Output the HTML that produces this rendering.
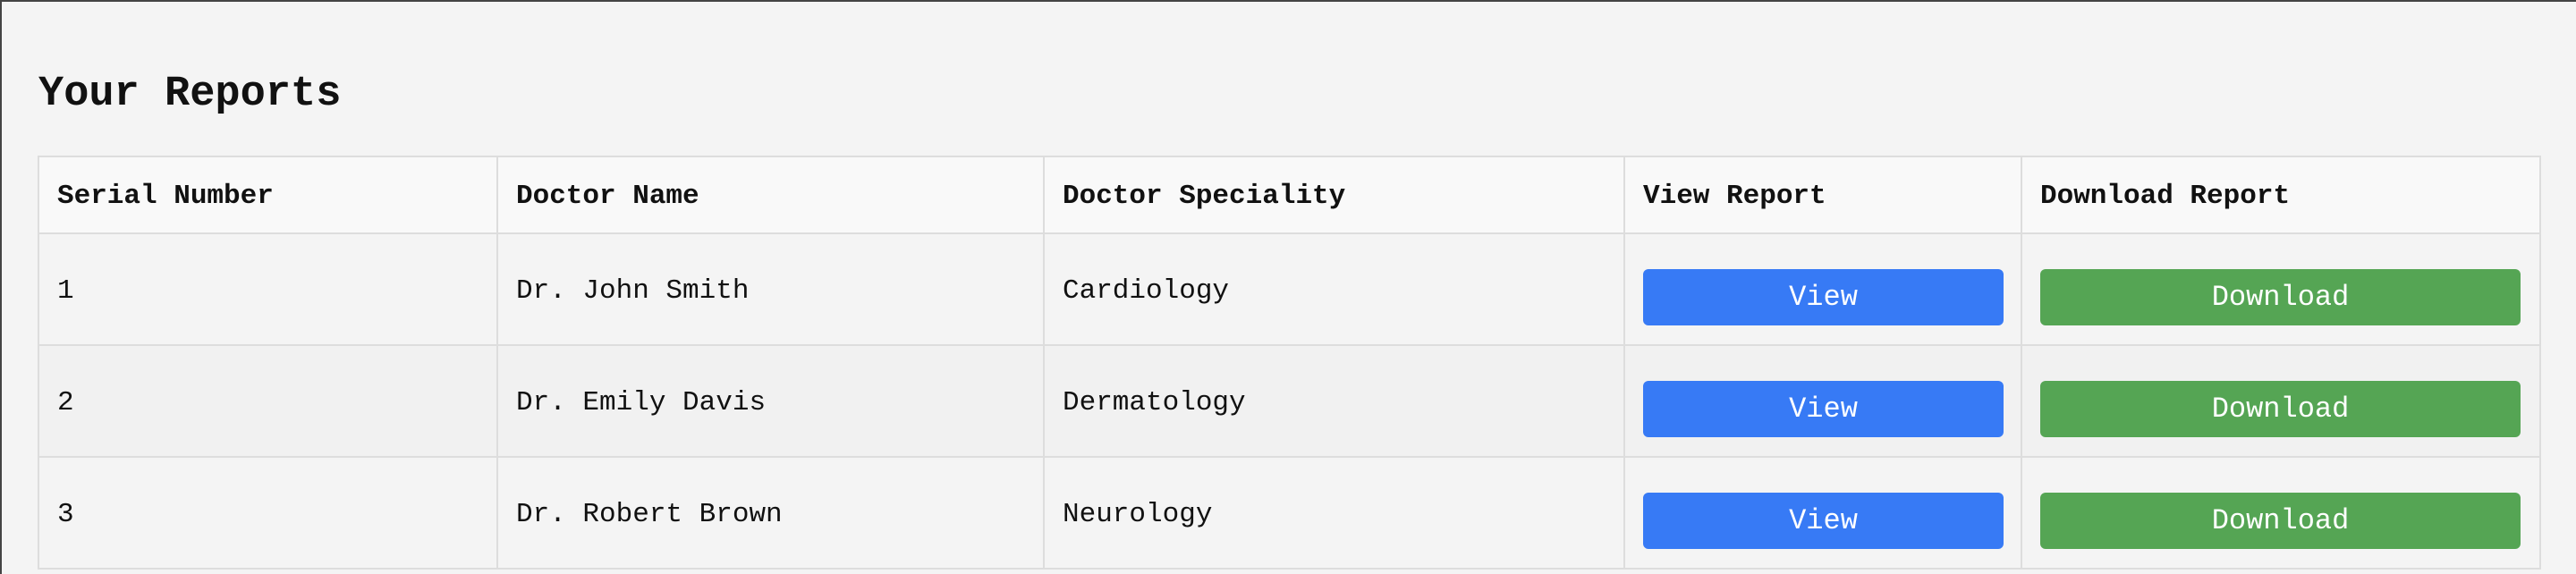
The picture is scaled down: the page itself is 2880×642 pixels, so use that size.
<!DOCTYPE html>
<html><head><style>
html,body{margin:0;padding:0;width:2880px;height:642px;overflow:hidden;background:#f4f4f4;font-family:"Liberation Mono",monospace;}
.frame{position:absolute;left:0;top:0;width:2880px;height:640px;border-top:2px solid #444;border-left:2px solid #444;}
h1{position:absolute;left:43px;top:76px;margin:0;font-size:47px;font-weight:bold;color:#111;line-height:60px;}
table{position:absolute;left:42px;top:174px;border-collapse:collapse;width:2797px;table-layout:fixed;}
td,th{border:2px solid #ddd;padding:3px 0 0 20px;text-align:left;font-size:31px;color:#111;}
th{height:81px;background:#f9f9f9;font-weight:bold;}
td{height:120px;}
tr.a td{background:#f4f4f4}
tr.b td{background:#f1f1f1}
.btn{display:block;height:63px;line-height:63px;border-radius:6px;color:#fff;text-align:center;font-size:32px;margin-top:15px;}
.v{background:#377af5;width:403px}
.d{background:#55a554;width:537px}
</style></head><body>
<div class="frame"></div>
<h1>Your Reports</h1>
<table>
<colgroup><col style="width:513px"><col style="width:611px"><col style="width:649px"><col style="width:444px"><col style="width:580px"></colgroup>
<tr><th>Serial Number</th><th>Doctor Name</th><th>Doctor Speciality</th><th>View Report</th><th>Download Report</th></tr>
<tr class="a"><td>1</td><td>Dr. John Smith</td><td>Cardiology</td><td><span class="btn v">View</span></td><td><span class="btn d">Download</span></td></tr>
<tr class="b"><td>2</td><td>Dr. Emily Davis</td><td>Dermatology</td><td><span class="btn v">View</span></td><td><span class="btn d">Download</span></td></tr>
<tr class="a"><td>3</td><td>Dr. Robert Brown</td><td>Neurology</td><td><span class="btn v">View</span></td><td><span class="btn d">Download</span></td></tr>
</table>
</body></html>
